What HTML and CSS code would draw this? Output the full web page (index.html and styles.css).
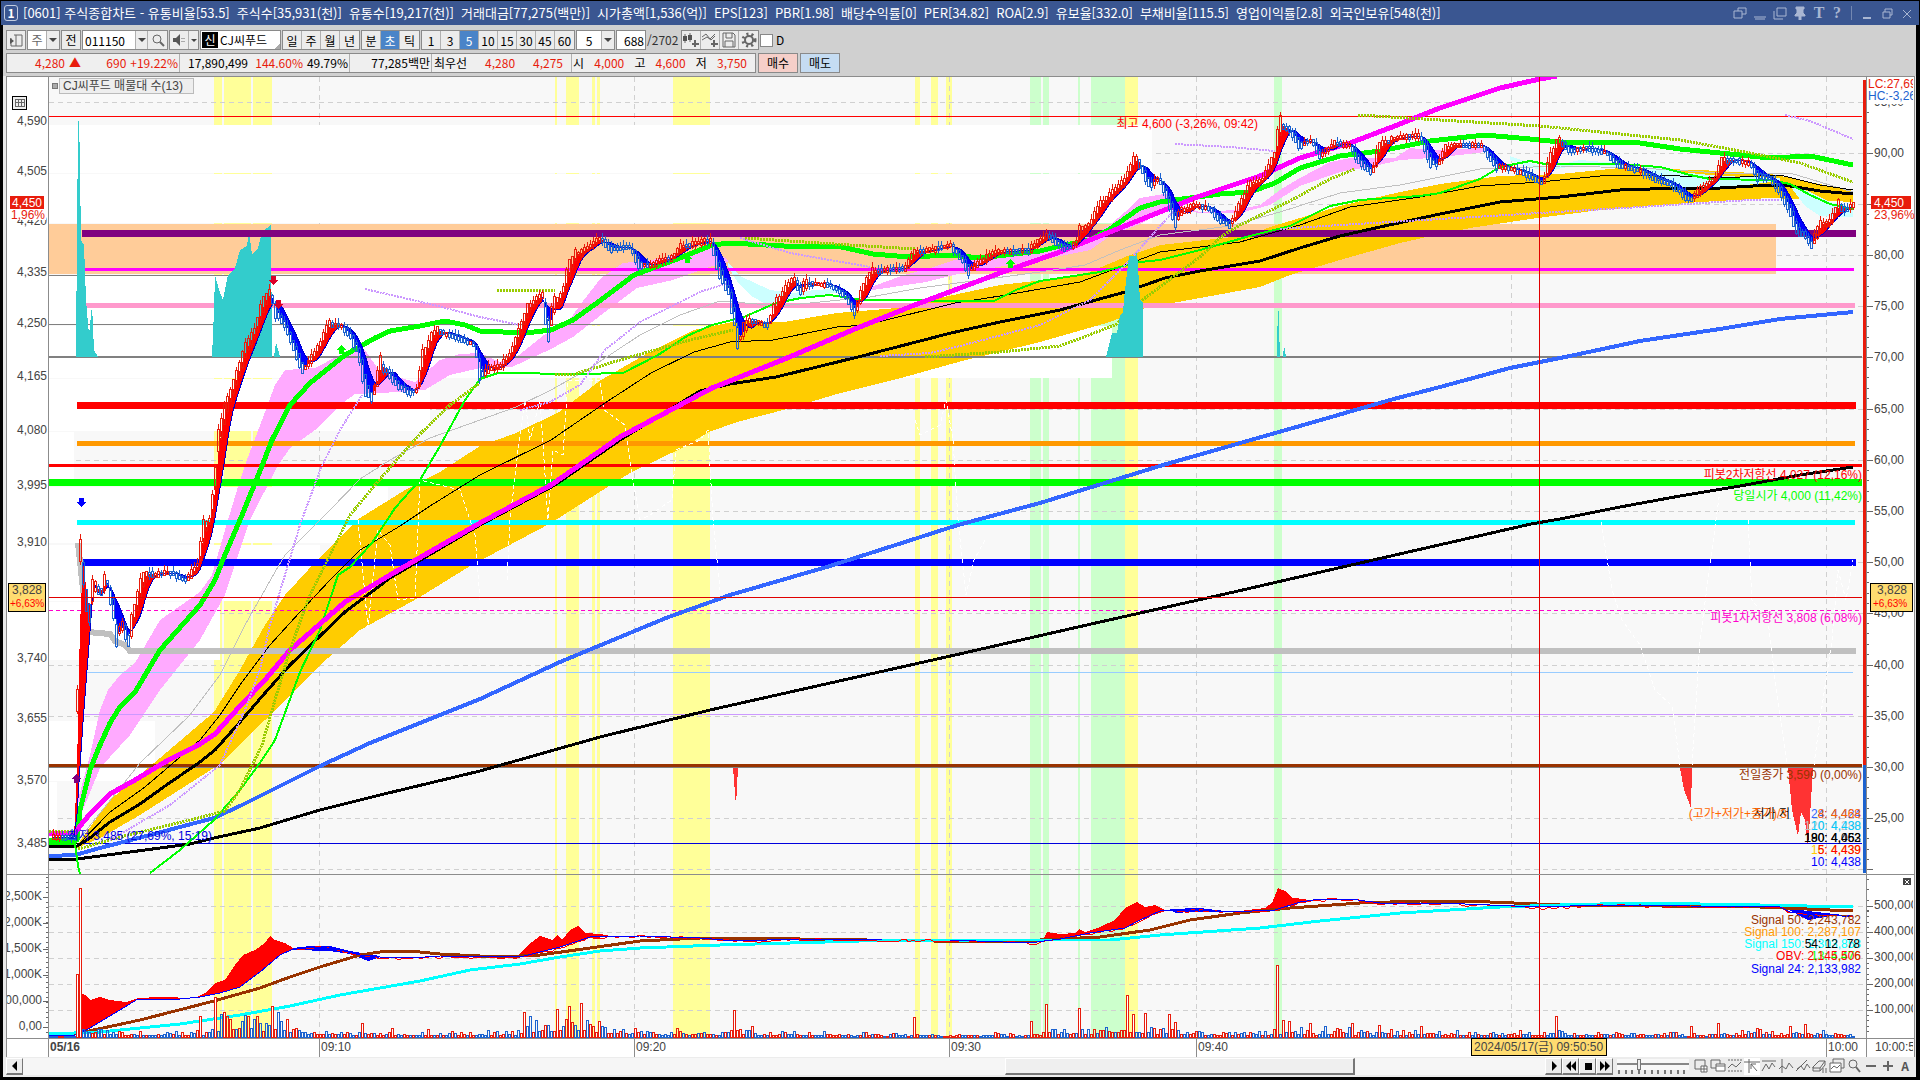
FILE: index.html
```html
<!DOCTYPE html>
<html lang="ko">
  <head>
    <meta charset="UTF-8" />
    <meta name="viewport" content="width=device-width, initial-scale=1.0" />
    <title>[0601] 주식종합차트</title>
    <link rel="stylesheet" href="styles.css">
  </head>
  <body>
    <header class="titlebar">
      <span class="badge">1</span>
      <h1 class="title">
        <span>[0601] 주식종합차트 - 유통비율[53.5]</span>
        <span>주식수[35,931(천)]</span>
        <span>유통수[19,217(천)]</span>
        <span>거래대금[77,275(백만)]</span>
        <span>시가총액[1,536(억)]</span>
        <span>EPS[123]</span>
        <span>PBR[1.98]</span>
        <span>배당수익률[0]</span>
        <span>PER[34.82]</span>
        <span>ROA[2.9]</span>
        <span>유보율[332.0]</span>
        <span>부채비율[115.5]</span>
        <span>영업이익률[2.8]</span>
        <span>외국인보유[548(천)]</span>
      </h1>
      <div class="window-tools">
        <button aria-label="link"><svg width="14" height="14"><path d="M1 5h8v7H1zM5 5V2h8v6H9" /></svg></button>
        <button aria-label="dock"><svg width="14" height="14"><path d="M1 11h12M2 13h10" /></svg></button>
        <button aria-label="copy"><svg width="14" height="14"><path d="M4 2h9v8H4zM1 5v8h9" /></svg></button>
        <button aria-label="pin"><svg width="14" height="14"><path class="solid" d="M3 1h8v2h-1v4l2 2v1H8v4H6v-4H2V9l2-2V3H3z" /></svg></button>
        <button class="glyph">T</button>
        <button class="glyph">?</button>
        <i></i>
        <button aria-label="minimize"><svg width="14" height="14"><path class="thick" d="M3 12h8" /></svg></button>
        <button aria-label="restore"><svg width="14" height="14"><path d="M3 6h7v6H3zM5 6V3h7v6h-2" /></svg></button>
        <button aria-label="close"><svg width="14" height="14"><path d="M3 4l8 8M11 4l-8 8" /></svg></button>
      </div>
    </header>

    <main class="panel">
      <div class="toolbar">
        <button class="box w20" aria-label="side panel"><svg width="14" height="14"><path d="M5 2h8v11H2V5M7 2v11M2 8h2" /><path class="solid" d="M1 5l4 3-4 3z" /></svg></button>
        <div class="group">
          <span class="cell white w20">주</span><button class="cell w14 drop" aria-label="type"></button>
        </div>
        <button class="box w20">전</button>
        <div class="group">
          <input class="code" type="text" value="011150" aria-label="종목코드"><button class="cell w14 drop" aria-label="codes"></button><button class="cell w20" aria-label="search"><svg width="14" height="14"><circle cx="6" cy="6" r="4" /><path class="thick" d="M9 9l4 4" /></svg></button>
        </div>
        <div class="group">
          <button class="cell w20" aria-label="sound"><svg width="14" height="14"><path class="solid" d="M1 5h3l4-4v12L4 9H1z" /><path d="M10 5v1M10 8v1M12 5v1M12 8v1" /></svg></button><button class="cell w10 drop" aria-label="sound options"></button>
        </div>
        <div class="stock"><b>신</b>CJ씨푸드</div>
        <div class="group even">
          <button class="cell w20">일</button><button class="cell w20">주</button><button class="cell w20">월</button><button class="cell w20">년</button>
        </div>
        <div class="group even">
          <button class="cell w20">분</button><button class="cell w20 on">초</button><button class="cell w20">틱</button>
        </div>
        <div class="group even">
          <button class="cell w20">1</button><button class="cell w20">3</button><button class="cell w20 on">5</button><button class="cell w20">10</button><button class="cell w20">15</button><button class="cell w20">30</button><button class="cell w20">45</button><button class="cell w20">60</button>
        </div>
        <div class="group">
          <input class="unit" type="text" value="5" aria-label="주기"><button class="cell w14 drop" aria-label="unit list"></button>
        </div>
        <input class="count" type="text" value="688" aria-label="봉 개수">
        <span class="total">/2702</span>
        <div class="group">
          <button class="cell w20" aria-label="add chart"><svg width="16" height="16"><path d="M2 2v9M7 1v9" /><path class="solid" d="M0 4h4v5H0zM5 3h4v5H5z" /><path class="thick" d="M12 8v7M9 12h7" /></svg></button><button class="cell w20" aria-label="add indicator"><svg width="16" height="16"><path d="M0 5l4-3 4 5 5-5M0 8l5-3 4 3 4-4" /><path class="thick" d="M12 8v7M9 12h7" /></svg></button><button class="cell w20" aria-label="save"><svg width="16" height="16"><path d="M2 1h10l2 2v12H2zM5 1v5h6V1M4 15V9h8v6" /></svg></button><button class="cell w20" aria-label="settings"><svg width="16" height="16"><circle class="gear" cx="8" cy="8" r="6" /><circle class="thick" cx="8" cy="8" r="4" /></svg></button>
        </div>
        <label class="check"><input type="checkbox">D</label>
      </div>

      <div class="quotes">
        <dl class="quote">
          <div class="q1"><dd class="up">4,280</dd><dd class="up tri">▲</dd><dd class="up push">690</dd><dd class="up">+19.22%</dd></div>
          <div class="q2"><dd>17,890,499</dd><dd class="up push">144.60%</dd><dd>49.79%</dd></div>
          <div class="q3"><dd class="push">77,285백만</dd></div>
          <div class="q4"><dt>최우선</dt><dd class="up">4,280</dd><dd class="up">4,275</dd></div>
          <div class="q5"><dt>시</dt><dd class="up">4,000</dd><dt>고</dt><dd class="up">4,600</dd><dt>저</dt><dd class="up">3,750</dd></div>
        </dl>
        <button class="buy">매수</button>
        <button class="sell">매도</button>
      </div>

      <svg id="chart" class="chart" viewBox="3 76 1913 981" role="img" aria-label="CJ씨푸드 5초 차트">
        <defs>
          <clipPath id="mainClip"><rect x="49" y="77" width="1817" height="797" /></clipPath>
          <clipPath id="rightClip"><rect x="1867" y="77" width="46" height="980" /></clipPath>
          <clipPath id="leftClip"><rect x="7" y="77" width="41" height="962" /></clipPath>
        </defs>

        <rect class="page" x="3" y="76" width="1913" height="981" />
        <rect class="paper" x="6" y="76" width="1908" height="981" />
        <rect class="plot" x="49" y="77" width="1817" height="961" />
        <g id="bands"></g>
        <g id="grid"></g>
        <g id="profile"></g>
        <rect class="profile-hot" x="49" y="224" width="1727" height="50" />

        <g clip-path="url(#mainClip)">
          <g id="clouds"></g>
          <g id="levels"></g>
          <path class="ghost" d="M358 520L368 628L378 530L390 545L398 600L415 598L420 480L460 490L475 535L480 600M507 580L510 520L518 450L525 400L530 440L540 400L548 520L553 450L563 455L568 380L600 380L604 410L625 425L633 480L640 520L650 515L672 500L676 450L700 440L708 430L713 520L720 590M915 420L920 435L930 430L940 425L946 400L953 440L958 520L966 595L974 560L985 540M1600 515L1612 590L1622 620L1640 645L1655 690L1672 706L1680 765M1692 765L1700 640L1712 550L1720 490M1748 520L1752 600L1768 620L1775 680L1787 765M1814 765L1820 720L1832 640L1838 570L1846 600L1853 560" />
          <path class="teal" d="M212 357L214 310L215 275L219 290L223 300L228 275L235 268L240 250L247 246L249 230L252 255L258 248L262 232L271 225L272 357Z M274 357L276 342L280 357Z" />
          <g id="averages"></g>
          <g id="candles"></g>
          <path class="teal" d="M76 357L77 230L78 130L79 112L80 170L81 240L84 245L86 300L89 335L92 305L94 350L98 357Z M1106 357L1112 333L1117 333L1120 315L1123 312L1125 290L1129 256L1136 256L1137 250L1140 300L1143 302L1143 357Z M1277 357L1278 295L1280 357Z M1283 357L1284 345L1286 357Z" />
          <path class="drop-red" d="M1680 768H1692L1691 808L1688 800L1684 790ZM1788 768H1813L1811 800L1808 848L1805 820L1801 812L1798 836L1792 810ZM733 768H738L736 806Z" />
          <g id="arrows"></g>
        </g>

        <g id="volume"></g>

        <path class="side-up" d="M1864 80V765" />
        <path class="side-down" d="M1864 765V873" />
        <path class="cross" d="M1539 77V1038M49 597H1862" />

        <g class="frame">
          <path d="M6 1057V76H1914V1057ZM48 76V1057M1866 76V1057M6 874H1914M6 1038H1914" />
          <path d="M319 1038V1057M634 1038V1057M949 1038V1057M1196 1038V1057M1826 1038V1057" />
        </g>

        <g class="legend">
          <rect x="52" y="83" width="5" height="5" class="knob" />
          <rect x="59" y="78" width="134" height="15" />
          <text x="63" y="90">CJ씨푸드 매물대 수(13)</text>
        </g>
        <g class="mini">
          <rect x="12" y="96" width="14" height="13" />
          <path d="M15 99H24V106H15ZM18 99V106M21 99V106M15 102H24" />
        </g>

        <g id="leftAxis" class="axis" clip-path="url(#leftClip)"></g>
        <g id="rightAxis" class="axis" clip-path="url(#rightClip)"></g>
        <g id="notes" class="notes"></g>

        <g class="axis" clip-path="url(#rightClip)">
          <rect class="page-white" x="1867" y="78" width="46" height="26" />
          <text class="c-red" x="1868" y="88">LC:27,69</text>
          <text class="c-sky" x="1868" y="100">HC:-3,26</text>
          <text x="1875" y="1051">10:00:50</text>
        </g>
        <g class="tag">
          <rect class="now" x="10" y="196" width="34" height="13" />
          <text class="c-white" x="12" y="207">4,450</text>
          <rect class="page-white" x="8" y="210" width="38" height="10" />
          <text class="c-red" x="11" y="219">1,96%</text>
          <rect class="now" x="1871" y="196" width="40" height="13" />
          <text class="c-white" x="1874" y="207">4,450</text>
          <text class="c-red" x="1874" y="219">23,96%</text>
          <rect class="cursor" x="8" y="583" width="37" height="28" />
          <text x="12" y="594">3,828</text>
          <text class="c-pure small" x="10" y="607">+6,63%</text>
          <rect class="cursor" x="1870" y="583" width="42" height="28" />
          <text x="1877" y="594">3,828</text>
          <text class="c-pure small" x="1873" y="607">+6,63%</text>
        </g>

        <g class="times">
          <text class="day" x="50" y="1051">05/16</text>
          <text x="321" y="1051">09:10</text>
          <text x="636" y="1051">09:20</text>
          <text x="951" y="1051">09:30</text>
          <text x="1198" y="1051">09:40</text>
          <text x="1828" y="1051">10:00</text>
          <rect x="1471" y="1038" width="135" height="17" />
          <text x="1474" y="1051">2024/05/17(금) 09:50:50</text>
        </g>
        <g class="closer">
          <rect x="1903" y="878" width="8" height="7" />
          <path d="M1905 880L1909 884M1909 880L1905 884" />
        </g>
      </svg>

      <footer class="bottom">
        <button class="key" aria-label="scroll left"><svg width="12" height="12"><path class="solid" d="M8 1v10L3 6z" /></svg></button>
        <div class="track"><div class="thumb"></div></div>
        <button class="key" aria-label="play"><svg width="12" height="12"><path class="solid" d="M4 1v10l5-5z" /></svg></button>
        <button class="key" aria-label="rewind"><svg width="12" height="12"><path class="solid" d="M6 1v10L1 6zM11 1v10L6 6z" /></svg></button>
        <button class="key" aria-label="stop"><svg width="12" height="12"><path class="solid" d="M3 3h7v7H3z" /></svg></button>
        <button class="key" aria-label="forward"><svg width="12" height="12"><path class="solid" d="M1 1v10l5-5zM6 1v10l5-5z" /></svg></button>
        <div class="speed">
          <input type="range" min="0" max="10" value="3" aria-label="속도">
          <svg viewBox="0 0 70 4"><path d="M2 0v4M9 0v4M15 0v4M22 0v4M28 0v4M35 0v4M41 0v4M48 0v4M54 0v4M61 0v4M67 0v4" /></svg>
        </div>
        <div class="draw-tools">
          <button aria-label="add grid"><svg width="16" height="16"><path d="M2 2h10v9H2z" /><path d="M8 8h6v6H8zM11 8v6M8 11h6" class="paper" /></svg></button>
          <button aria-label="windows"><svg width="16" height="16"><path d="M1 2h9v8H1z" /><path class="paper" d="M6 6h9v7H6zM6 8h9" /></svg></button>
          <button aria-label="compare"><svg width="16" height="16"><path stroke-dasharray="2 1" d="M1 2h14M1 13h14" /><path d="M1 10l4-4 4 3 5-5" /></svg></button>
          <button class="pressed" aria-label="cross"><svg width="16" height="16"><path d="M0 4h16M5 1v14M7 6l6 7M7 6v5M7 6h5" /></svg></button>
          <button aria-label="trend"><svg width="16" height="16"><path d="M1 3h14M1 13l4-7 3 5 3-6 3 4" /></svg></button>
          <button aria-label="vertical"><svg width="16" height="16"><path d="M4 1v14M1 11l3-3 4 3 3-6 4 5" /></svg></button>
          <button aria-label="slope"><svg width="16" height="16"><path d="M1 13L12 2M2 11l4-3 3 4 3-6 3 4" /></svg></button>
          <button aria-label="erase"><svg width="16" height="16"><path d="M1 9l6-6h6L8 10H1zM1 9v4h7V10M8 13l5-6V3M11 10v5M14 10v5" /></svg></button>
          <button aria-label="layers"><svg width="16" height="16"><path d="M4 5V1h11v9h-3" /><path class="paper" d="M1 5h11v9H1z" /><path d="M2 11l3-3 3 2 3-3" /></svg></button>
          <button aria-label="zoom"><svg width="16" height="16"><circle cx="7" cy="6" r="4" /><path class="thick" d="M10 9l4 5" /></svg></button>
          <button aria-label="zoom out"><svg width="16" height="16"><path class="thick" d="M3 8h10" /></svg></button>
          <button aria-label="zoom in"><svg width="16" height="16"><path class="thick" d="M3 8h10M8 3v10" /></svg></button>
          <button class="letter">A</button>
        </div>
      </footer>
    </main>
    <script src="chart.js"></script>
  </body>
</html>
```

FILE: styles.css
```css
* {
  box-sizing: border-box;
}
body {
  margin: 0;
  background: #000;
  color: #000;
  font: 12px/14px "Noto Sans CJK KR", "Liberation Sans", sans-serif;
}
button,
input {
  font: inherit;
  color: inherit;
  margin: 0;
  padding: 0;
}
button {
  display: flex;
  align-items: center;
  justify-content: center;
  border: 0;
  background: none;
}
svg path,
svg circle {
  fill: none;
  stroke: #666;
}
svg .solid {
  fill: #555;
  stroke: none;
}
svg .thick {
  stroke-width: 2;
}

/* title bar */
.titlebar {
  display: flex;
  align-items: center;
  height: 25px;
  margin: 0 1px;
  padding: 0 3px;
  border-top: 1px solid #000;
  background: #3a5691;
  color: #fff;
}
.badge {
  width: 14px;
  height: 16px;
  border: 1px solid #c4cde0;
  border-radius: 3px;
  font-weight: bold;
  text-align: center;
}
.title {
  display: flex;
  flex: 1;
  gap: 7px;
  margin: 0 0 0 5px;
  font-size: 13px;
  font-weight: normal;
  line-height: 20px;
  white-space: nowrap;
}
.window-tools {
  display: flex;
  align-items: center;
  gap: 2px;
}
.window-tools button {
  width: 18px;
}
.window-tools path {
  stroke: #a9b6d2;
}
.window-tools .solid {
  fill: #a9b6d2;
}
.window-tools .glyph {
  width: 16px;
  color: #a9b6d2;
  font: bold 16px/16px "Liberation Serif", serif;
}
.window-tools i {
  height: 14px;
  margin: 0 4px;
  border-left: 1px solid #7387b1;
}

/* toolbars */
.panel {
  margin: 0 4px 0 3px;
  background: #d0d0d0;
}
.toolbar {
  display: flex;
  gap: 1px;
  height: 28px;
  padding: 5px 3px 3px;
}
.box,
.group,
.stock,
.count {
  display: flex;
  height: 20px;
  border: 1px solid #8a8a8a;
  background: #ececec;
}
.cell {
  height: 18px;
  border-right: 1px solid #b0b0b0;
  background: #ececec;
  text-align: center;
  line-height: 17px;
}
.cell:last-child {
  border-right: 0;
}
.even .cell {
  width: 19px;
}
.w20 {
  width: 19px;
}
.box.w20 {
  width: 20px;
}
.w14 {
  width: 12px;
}
.w10 {
  width: 9px;
}
.white {
  background: #fff;
  color: #666;
}
.on {
  background: #4a84c8;
  color: #fff;
}
.drop::after {
  content: "";
  border: 4px solid transparent;
  border-top: 4px solid #444;
  border-bottom: 0;
}
.w10.drop::after {
  border-width: 3px;
  border-bottom: 0;
}
.code,
.unit {
  width: 53px;
  height: 18px;
  padding-left: 2px;
  border: 0;
  border-right: 1px solid #b0b0b0;
  background: #fff;
}
.unit {
  width: 25px;
  padding: 0;
  text-align: center;
}
.stock {
  width: 81px;
  background: linear-gradient(135deg, #fff 94%, #aaa 94%);
  line-height: 17px;
}
.stock b {
  width: 16px;
  margin: 1px 2px 1px 1px;
  background: #000;
  color: #fff;
  font-weight: normal;
  line-height: 15px;
  text-align: center;
}
.count {
  width: 30px;
  padding-right: 1px;
  background: #fff;
  text-align: right;
}
.total {
  width: 33px;
  color: #333;
  line-height: 19px;
}
.gear {
  stroke-width: 3;
  stroke-dasharray: 2 3;
}
.check {
  display: flex;
  align-items: center;
  gap: 3px;
}
.check input {
  width: 13px;
  height: 13px;
  border: 1px solid #888;
  background: #fff;
  appearance: none;
}

.quotes {
  display: flex;
  gap: 2px;
  height: 23px;
  padding: 0 3px 3px;
}
.quote {
  display: flex;
  width: 750px;
  margin: 0;
  border: 1px solid #8a8a8a;
  background: #efefef;
  font-size: 12px;
  line-height: 17px;
  white-space: nowrap;
}
.quote div {
  display: flex;
  gap: 4px;
  padding: 0 1px 0 8px;
  border-right: 1px solid #b0b0b0;
}
.quote dd,
.quote dt {
  margin: 0;
}
.quote .up {
  color: #e81c0c;
}
.quote .push {
  margin-left: auto;
}
.quote .q1 {
  width: 173px;
  padding-left: 28px;
}
.quote .q2 {
  width: 170px;
}
.quote .q3 {
  width: 82px;
}
.quote .q4 {
  width: 140px;
  justify-content: space-between;
  padding: 0 8px 0 2px;
}
.quote .q5 {
  flex: 1;
  justify-content: space-between;
  padding: 0 8px 0 1px;
  border-right: 0;
}
.buy,
.sell {
  width: 40px;
  border: 1px solid #8a8a8a;
  background: #f6cfc9;
}
.sell {
  background: #c5dcf2;
}

/* chart */
.chart {
  display: block;
  width: 100%;
  font: 12px "Liberation Sans", "Noto Sans CJK KR", sans-serif;
  shape-rendering: crispEdges;
}
.chart text {
  fill: #444;
}
.chart .page {
  fill: #e8e8e8;
}
.chart .paper,
.chart .page-white {
  fill: #fff;
}
.chart .plot {
  fill: #f8f8f8;
}
.chart .yellow {
  fill: #ffff99;
}
.chart .green {
  fill: #ccffcc;
}
.chart .profile {
  fill: #fff;
}
.chart .profile-hot {
  fill: #ffcc99;
}
.chart .gridline {
  stroke: #d0d0d0;
  stroke-dasharray: 5 4;
}
.chart .frame path {
  stroke: #8c8c8c;
}
.chart .ghost {
  stroke: #fff;
  stroke-dasharray: 4 3;
}
.chart .teal {
  fill: #33cccc;
  stroke: none;
}
.chart .drop-red {
  fill: #ff3333;
  stroke: none;
}
.chart .side-up {
  stroke: #e81c0c;
  stroke-width: 3;
}
.chart .side-down {
  stroke: #1c62cf;
  stroke-width: 3;
}
.chart .cross {
  stroke: #e00000;
}
.chart .legend rect {
  fill: #eee;
  stroke: #bbb;
}
.chart .legend .knob {
  fill: #aaa;
  stroke: #777;
}
.chart .mini rect {
  fill: #eee;
  stroke: #000;
}
.chart .now {
  fill: #e81c0c;
}
.chart .cursor,
.chart .times rect {
  fill: #ffdc70;
  stroke: #000;
}
.chart .day {
  font-weight: bold;
}
.chart .small {
  font-size: 10px;
}
.chart .closer rect {
  fill: #444;
}
.chart .closer path {
  stroke: #fff;
}
.chart .notes text {
  text-anchor: end;
}
.chart .axis .end {
  text-anchor: end;
}
.chart .c-red {
  fill: #e81c0c;
}
.chart .c-pure {
  fill: #f00;
}
.chart .c-sky {
  fill: #1c62cf;
}
.chart .c-white {
  fill: #fff;
}

/* bottom bar */
.bottom {
  display: flex;
  align-items: center;
  height: 20px;
  padding: 0 3px 2px;
  background: #ececec;
}
.key {
  width: 17px;
  height: 17px;
  border: 1px solid #fff;
  border-right-color: #777;
  border-bottom: 2px solid #777;
  background: #ececec;
}
.key .solid {
  fill: #000;
}
.track {
  display: flex;
  flex: 1;
  height: 17px;
  background: #f6f6f6;
}
.thumb {
  width: 23%;
  margin-left: 64.5%;
  border: 1px solid #fff;
  border-right: 2px solid #777;
  border-bottom: 2px solid #777;
  background: #efefef;
}
.speed {
  width: 72px;
  margin: 0 4px;
}
.speed input {
  display: block;
  width: 72px;
  height: 11px;
  appearance: none;
  background: linear-gradient(#f8f8f8 4px, #888 4px, #888 6px, #f8f8f8 6px);
}
.speed input::-webkit-slider-thumb {
  width: 4px;
  height: 11px;
  border: 1px solid #777;
  background: #eee;
  appearance: none;
}
.speed svg {
  display: block;
  height: 4px;
}
.speed path {
  stroke: #000;
}
.draw-tools {
  display: flex;
  justify-content: space-between;
  width: 220px;
}
.draw-tools button {
  width: 16px;
  height: 17px;
}
.draw-tools .pressed {
  background: #fff;
}
.draw-tools .paper {
  fill: #fff;
}
.letter {
  color: #555;
  font-weight: bold;
}
```

FILE: chart.js
```javascript
const NS = "http://www.w3.org/2000/svg";

function add(parent, tag, attrs, text) {
  const el = document.createElementNS(NS, tag);
  for (const key in attrs) el.setAttribute(key, attrs[key]);
  if (text) el.textContent = text;
  document.getElementById(parent).appendChild(el);
}

// "x,y x,y ..." -> [[x, y], ...]
const points = (s) => s.split(" ").map((p) => p.split(",").map(Number));

function line(parent, color, width, pts, dash) {
  const attrs = { points: pts, fill: "none", stroke: color, "stroke-width": width, "stroke-linejoin": "round" };
  if (dash) attrs["stroke-dasharray"] = dash;
  add(parent, "polyline", attrs);
}

function area(parent, color, upper, lower) {
  const back = lower.split(" ").reverse().join(" ");
  add(parent, "polygon", { points: upper + " " + back, fill: color });
}

function valueAt(pts, x) {
  for (let i = 1; i < pts.length; i++) {
    if (x <= pts[i][0]) {
      const [x0, y0] = pts[i - 1];
      const [x1, y1] = pts[i];
      return y0 + ((y1 - y0) * (x - x0)) / (x1 - x0);
    }
  }
  return pts[pts.length - 1][1];
}

let seed = 7;
function rand() {
  seed = (seed * 16807) % 2147483647;
  return seed / 2147483647;
}

// Signal bands
[[214, 222], [224, 251], [253, 272], [555, 557], [566, 579], [592, 595], [597, 600], [673, 710],
 [915, 920], [931, 938], [946, 952], [1125, 1138]].forEach(([a, b]) =>
  add("bands", "rect", { class: "yellow", x: a, y: 77, width: b - a, height: 961 }));
[[1030, 1041], [1043, 1049], [1078, 1080], [1091, 1125], [1274, 1282]].forEach(([a, b]) =>
  add("bands", "rect", { class: "green", x: a, y: 77, width: b - a, height: 961 }));

// Grid
const rows = [102, 153, 204, 255, 306, 357, 409, 460, 511, 562, 613, 665, 716, 767, 818, 869];
const volRows = [906, 932, 958, 984, 1010];
rows.concat(volRows).forEach((y) => add("grid", "path", { class: "gridline", d: `M49 ${y}H1864` }));
[319, 634, 949, 1196, 1511, 1826].forEach((x) => add("grid", "path", { class: "gridline", d: `M${x} 77V1038` }));

// Volume profile
[[125, 173, 1152], [174, 223, 1152], [275, 325, 948], [326, 378, 1112], [379, 431, 430], [432, 486, 74],
 [487, 543, 388], [545, 601, 320], [602, 660, 220], [721, 781, 155], [782, 842, 57]].forEach(([a, b, x]) =>
  add("profile", "rect", { class: "profile", x: 49, y: a, width: x - 49, height: b - a }));

// Clouds
area("clouds", "#ffcc00",
  "77,845 110,800 160,758 214,712 240,670 265,625 285,595 320,557 360,518 405,490 440,472 480,446 516,433 559,412 601,380 648,353 694,330 737,321 784,322 837,313 909,307 944,297 1000,285 1080,276 1130,255 1160,245 1250,235 1270,227 1300,218 1340,206 1400,192 1440,184 1500,176 1560,174 1620,168 1700,170 1770,174 1800,180 1853,191",
  "77,848 100,838 140,815 220,764 265,720 320,665 360,630 420,597 470,566 487,557 551,523 598,493 630,473 684,447 709,432 737,422 787,409 837,394 901,378 962,361 1040,342 1110,322 1145,308 1200,298 1260,287 1290,275 1340,260 1400,243 1440,234 1470,228 1530,219 1600,210 1700,202 1770,198 1853,202");
area("clouds", "#ffaaff",
  "78,800 90,755 100,710 108,690 120,675 135,663 160,620 200,592 212,575 225,530 237,490 245,465 262,420 275,385 285,370 315,368 340,355 365,350 380,372 415,382 440,360 460,354 480,353 500,362 519,355 544,335 566,325 580,305 601,278 623,263 651,260 712,248 728,260",
  "82,812 100,768 130,735 160,690 200,640 225,595 250,520 277,467 290,448 315,430 340,405 355,394 400,392 425,390 450,375 480,368 512,367 551,349 573,337 601,315 637,288 673,280 709,267 728,262");
area("clouds", "#ccffff", "728,262 740,276 770,290 793,293 815,290 845,288", "728,266 738,283 750,295 765,304 790,300 845,291");
area("clouds", "#ffaaff",
  "866,289 901,276 930,268 955,260 1040,252 1070,247 1110,225 1125,212 1140,198 1170,193 1178,205 1200,212 1235,210 1260,205 1280,190 1300,178 1330,162 1350,158 1395,158 1410,148 1430,150 1485,148",
  "873,290 926,282 962,273 1040,260 1070,254 1090,250 1110,236 1140,224 1170,208 1200,213 1240,213 1270,205 1300,186 1340,172 1375,166 1400,160 1430,158 1460,155 1485,152");
area("clouds", "#ccffff", "1510,156 1545,168 1580,160 1640,165 1680,172 1720,176 1780,178", "1510,160 1545,172 1580,164 1640,169 1680,190 1720,188 1780,181");
area("clouds", "#ccffff", "1790,184 1810,192 1830,202 1853,207", "1790,186 1805,206 1820,216 1853,217");

// Horizontal levels: colour, width, y, x from, x to
[["#f00", 1, 116, 49, 1862], ["#808080", 1, 275, 49, 948], ["#808080", 1, 324, 49, 712],
 ["#808080", 2, 357, 49, 1862], ["#800080", 7, 233, 82, 1856], ["#f0f", 3, 269, 85, 1854],
 ["#ff99cc", 5, 305, 86, 1855], ["#f00", 7, 405, 77, 1856], ["#ff9900", 5, 443, 77, 1855],
 ["#f00", 3, 465, 49, 1862], ["#0f0", 7, 482, 49, 1862], ["#0ff", 5, 522, 77, 1855],
 ["#00f", 7, 562, 77, 1856], ["#99ccff", 1, 672, 79, 1853], ["#cc99ff", 1, 714, 79, 1853],
 ["#993300", 3, 765, 49, 1862], ["#808080", 1, 767, 49, 1862], ["#00d", 1, 843, 49, 1862]].forEach(([c, w, y, a, b]) =>
  line("levels", c, w, `${a},${y} ${b},${y}`));
line("levels", "#ff00cc", 1, "49,610 1862,610", "4 3");
line("levels", "#c0c0c0", 6, "78,543 82,580 88,632 110,634 115,641 125,645 130,651 1856,651");

// Moving averages
line("averages", "#800080", 7, "240,233 280,233");
line("averages", "#c0c0c0", 1, "80,838 140,763 190,715 220,675 245,625 275,572 285,555 330,510 360,479 390,460 430,438 480,420 516,407 551,390 590,368 640,335 680,315 720,301 745,303 780,306 870,297 920,288 1040,272 1085,265 1120,250 1160,235 1230,226 1280,212 1340,193 1400,185 1480,169 1560,166 1640,168 1720,173 1790,173 1853,192");
line("averages", "#3366ff", 4, "49,856 75,855 100,848 150,835 214,818 240,806 290,781 320,766 370,743 420,723 480,699 560,662 666,618 730,595 830,566 958,525 1040,503 1163,465 1300,426 1390,400 1440,387 1510,368 1570,356 1640,341 1720,329 1780,319 1853,312");
line("averages", "#000", 3, "49,859 77,859 130,852 190,844 214,838 260,828 320,810 380,795 480,771 600,737 710,710 955,655 1100,622 1225,594 1347,566 1531,524 1560,519 1620,507 1680,496 1740,486 1800,475 1853,467");
line("averages", "#000", 1, "49,845 80,843 110,812 145,787 200,740 220,715 240,685 270,645 300,612 330,580 360,550 400,526 430,506 480,475 551,440 605,403 651,373 694,352 730,342 773,340 837,327 866,325 955,303 1000,296 1080,282 1160,252 1240,242 1300,225 1350,207 1420,197 1480,186 1540,182 1600,176 1660,175 1720,178 1780,175 1800,180 1820,185 1853,190");
line("averages", "#000", 3, "49,847 77,846 90,838 110,822 140,804 165,786 200,762 215,750 240,722 265,693 290,665 320,636 345,612 390,578 480,525 555,485 620,440 700,391 730,384 776,377 858,357 951,333 1000,322 1060,310 1125,292 1165,278 1200,271 1260,261 1300,248 1340,236 1380,227 1440,214 1500,202 1560,197 1620,190 1680,188 1720,188 1770,185 1790,186 1820,191 1853,194");
line("averages", "#0f0", 5, "49,840 77,840 80,810 90,770 100,745 110,723 120,707 135,692 160,650 200,605 215,580 222,562 240,520 262,466 272,440 290,405 310,383 345,355 375,338 390,331 420,326 445,321 465,325 480,331 526,333 551,330 573,320 601,300 634,275 680,258 712,245 730,243 784,246 837,246 873,254 909,257 951,255 980,258 1040,251 1060,246 1090,240 1110,229 1140,208 1160,202 1220,194 1250,192 1275,183 1300,168 1340,156 1380,151 1430,141 1485,135 1530,139 1560,142 1640,143 1680,149 1720,153 1770,158 1810,156 1853,165");
line("averages", "#0f0", 2, "49,844 75,844 78,866 80,874");
line("averages", "#0f0", 2, "150,873 180,850 214,820 240,790 262,760 275,740 300,672 320,630 338,575 350,567 372,543 395,508 420,480 440,446 465,400 480,379 498,373 580,374 623,373 658,355 687,336 712,325 744,317 776,303 801,298 830,295 862,300 994,301 1016,290 1040,281 1100,272 1140,262 1160,260 1200,250 1250,236 1290,226 1330,206 1360,200 1420,196 1440,193 1480,179 1500,167 1530,161 1545,164 1620,164 1660,167 1690,175 1710,179 1770,180 1790,184 1810,195 1830,204 1853,209");
line("averages", "#f0f", 5, "49,833 75,833 80,826 90,814 110,794 135,780 165,762 200,744 215,734 240,706 265,680 290,650 320,624 345,602 390,575 440,546 480,523 551,485 620,437 712,388 780,361 855,329 912,306 1000,273 1060,252 1110,232 1160,212 1200,196 1260,176 1300,158 1350,143 1400,124 1440,108 1500,88 1540,79 1557,76");

["49,831 77,831", "78,849 120,837 190,820 225,811 240,790 262,745 275,700 290,650 310,595 330,555 350,515 375,485 395,462 420,434 450,405 480,383",
 "497,290 555,290", "555,375 575,374 620,360 690,340 733,330", "745,238 850,245 915,249",
 "925,357 1000,352 1060,346 1115,325 1145,298 1200,257 1222,236 1240,225 1290,201 1330,179 1355,169",
 "1358,115 1440,120 1540,126 1620,134 1680,140 1740,151 1800,163 1853,182"].forEach((p) =>
  line("averages", "#99cc00", 3, p, "2 1"));
["110,840 170,805 220,765 245,710 260,670 270,625 285,575 300,525 320,470 340,430 362,395",
 "365,289 430,304 480,317 520,325", "520,410 550,402 580,385 605,350 640,322 670,307 700,292 728,283",
 "740,238 790,253 830,260 870,267", "880,356 930,353 960,346 1040,325 1090,300 1130,260 1160,226 1175,210",
 "1175,144 1230,147 1275,151", "1280,229 1340,225 1440,219 1540,213 1640,207 1750,200 1780,200",
 "1785,115 1810,121 1853,139"].forEach((p) =>
  line("averages", "#cc99ff", 2, p, "2 1"));

// Price candles with the ribbon between the two fast averages
const price = points("49,837 76,837 77,700 78,500 80,550 84,580 88,620 92,590 96,585 100,595 106,575 108,590 112,600 116,635 122,625 128,640 132,620 136,605 142,580 147,573 155,575 165,572 175,574 185,580 190,575 198,565 203,530 210,520 214,490 218,440 225,410 235,380 245,350 255,330 262,305 270,292 275,310 285,325 295,350 303,370 310,360 320,345 328,325 340,325 350,335 358,350 365,385 372,398 380,365 388,372 398,385 410,392 417,390 422,360 430,340 436,330 450,335 465,340 475,345 480,375 490,368 500,366 510,355 518,335 527,310 535,300 542,295 548,330 553,305 562,295 568,270 575,255 585,250 600,238 610,248 630,247 640,265 652,265 660,260 672,258 680,248 700,242 711,240 718,268 728,290 735,320 738,345 742,330 750,320 768,325 775,305 785,290 793,278 800,290 805,283 830,285 845,295 855,312 862,290 872,272 885,270 905,268 915,252 930,250 950,245 960,255 968,270 980,262 995,252 1028,250 1040,240 1048,235 1065,248 1075,245 1080,230 1090,225 1100,205 1115,190 1125,180 1135,158 1140,165 1150,185 1158,178 1165,190 1175,220 1180,212 1195,205 1210,208 1220,220 1230,225 1240,205 1250,185 1262,180 1275,155 1279,125 1290,130 1300,145 1312,140 1320,155 1335,143 1350,145 1360,162 1372,172 1380,145 1395,138 1420,135 1430,160 1437,165 1445,150 1452,145 1482,145 1495,165 1510,168 1530,175 1543,183 1550,160 1558,140 1570,150 1590,148 1605,152 1620,165 1640,170 1655,178 1670,183 1690,200 1700,190 1715,178 1722,160 1735,160 1750,163 1757,175 1770,178 1780,190 1790,210 1797,230 1805,235 1811,245 1820,225 1830,222 1838,205 1845,210 1853,205");
const bars = [];
for (let x = 50; x <= 1853; x += 3) bars.push([x, valueAt(price, x)]);
const mean = (i, n) => {
  const part = bars.slice(Math.max(0, i - n + 1), i + 1);
  return part.reduce((s, b) => s + b[1], 0) / part.length;
};
let slow = "";
for (let i = 1; i < bars.length; i++) {
  const [x0, x1] = [bars[i - 1][0], bars[i][0]];
  const [f0, f1, s0, s1] = [mean(i - 1, 2), mean(i, 2), mean(i - 1, 6), mean(i, 6)];
  add("candles", "polygon", { points: `${x0},${f0} ${x1},${f1} ${x1},${s1} ${x0},${s0}`, fill: f1 < s1 ? "#f00" : "#00f" });
  slow += `${x1},${s1} `;
}
line("candles", "#00c", 1, slow.trim());
for (let i = 1; i < bars.length; i++) {
  const [x, y] = bars[i];
  const move = y - bars[i - 1][1] + (rand() - 0.5) * 4;
  const size = Math.min(22, 3 + Math.abs(move) * 1.2);
  const color = move < 0 ? "#e81c0c" : "#1c62cf";
  const wick = Math.floor(rand() * 6);
  const top = Math.round(y - size / 2);
  add("candles", "path", { d: `M${x} ${top - wick}V${top}M${x - 1} ${top}h2v${Math.round(size)}h-2zM${x} ${top + Math.round(size)}v${Math.floor(rand() * 5)}`, style: `stroke:${color}` });
}

// Buy and sell arrows: x, y, direction, colour
[[273, 280, 1, "#dc0028"], [278, 304, 1, "#dc0028"], [341, 350, -1, "#0f0"], [687, 259, -1, "#0f0"],
 [1010, 264, -1, "#0f0"], [81, 502, 1, "#00f"], [76, 779, -1, "#800080"]].forEach(([x, y, d, c]) =>
  add("arrows", "polygon", { fill: c, points: `${x - 2},${y - 4 * d} ${x + 3},${y - 4 * d} ${x + 3},${y} ${x + 5},${y} ${x},${y + 5 * d} ${x - 5},${y} ${x - 2},${y}` }));

// OBV panel
area("volume", "#f00",
  "75,1036 77,1036 79,993 85,995 90,1000 100,997 110,1000 126,1002 138,998 160,997 195,998 205,993 215,983 225,980 235,965 243,955 255,950 265,943 270,936 275,940 285,943 293,948",
  "75,1036 90,1028 138,999 180,999 200,997 220,993 240,987 260,972 280,955 293,949");
area("volume", "#f00", "510,957 518,956 528,945 540,936 553,940 557,935 562,940 570,930 578,926 585,933 600,934 610,936", "510,958 530,956 560,947 590,938 610,937");
area("volume", "#f00", "1043,940 1047,932 1060,934 1075,933 1079,929 1085,932 1100,927 1115,920 1125,908 1137,902 1145,907 1155,905 1165,910", "1043,941 1060,939 1090,933 1125,928 1140,920 1165,911");
area("volume", "#f00", "1240,911 1265,908 1272,903 1278,888 1285,891 1292,898 1305,899 1312,902", "1240,912 1275,910 1300,903 1312,902");
area("volume", "#00f", "293,948 310,946 330,946 350,951 380,956", "293,950 330,951 350,954 368,961 380,957");
area("volume", "#00f", "1170,909 1200,908 1225,911", "1170,910 1176,913 1190,912 1225,912");
area("volume", "#00f", "1785,907 1800,910 1825,913 1853,916", "1785,908 1808,920 1830,916 1853,917");
line("volume", "#993300", 3, "49,1034 75,1034 140,1020 214,1001 260,988 290,977 320,967 360,955 380,952 410,951 440,954 500,957 540,955 590,948 640,941 700,938 800,939 1000,942 1100,937 1150,930 1190,920 1240,913 1290,908 1360,903 1420,901 1490,902 1560,905 1760,907 1853,911");
line("volume", "#0ff", 3, "49,1034 100,1032 180,1024 240,1015 290,1006 340,995 380,988 420,981 470,970 520,964 560,957 600,951 640,948 720,945 860,941 1000,940 1110,940 1160,935 1260,928 1320,921 1400,913 1500,907 1560,905 1640,903 1760,905 1853,907");
const obv = points("49,1035 75,1035 90,1028 138,999 180,999 200,997 220,993 240,987 260,972 280,955 293,949 320,947 340,950 360,955 380,957 410,958 440,956 520,957 560,947 590,937 640,936 700,938 735,941 800,939 882,940 950,940 1029,943 1060,939 1090,933 1125,928 1140,920 1160,911 1200,910 1230,912 1275,910 1300,902 1320,899 1350,899 1380,903 1440,903 1540,907 1600,905 1690,906 1780,907 1790,912 1820,914 1853,916");
let wave = "";
for (let x = 297; x <= 1853; x += 4) wave += `${x},${Math.round(valueAt(obv, x) + rand() * 3 - 1)} `;
line("volume", "#f00", 1, wave.trim());
line("volume", "#00f", 1, obv.join(" "));

// Volume bars
const level = points("49,1 76,2 80,16 110,12 130,6 200,6 214,18 225,26 275,24 300,12 330,9 350,7 480,6 515,9 530,18 570,26 600,15 640,9 720,7 735,14 760,7 900,5 1025,5 1050,11 1090,9 1110,18 1140,18 1160,9 1200,6 1275,9 1285,14 1310,9 1380,9 1480,6 1560,7 1700,5 1790,10 1820,8 1853,4");
const spikes = { 77: 63, 80: 149, 200: 21, 215: 40, 224: 25, 272: 31, 287: 18, 362: 14, 392: 9, 524: 25, 557: 28, 569: 31, 581: 34, 599: 16, 734: 27, 914: 20, 1031: 16, 1046: 33, 1079: 29, 1127: 42, 1133: 23, 1145: 24, 1169: 23, 1175: 15, 1277: 72, 1283: 17, 1289: 16, 1310: 14, 1352: 14, 1379: 12, 1421: 11, 1556: 21, 1691: 11, 1718: 14, 1790: 11, 1805: 13 };
for (let x = 50; x <= 1853; x += 3) {
  const h = spikes[x] || Math.max(1, Math.round(valueAt(level, x) * (0.25 + rand() * rand())));
  const color = rand() < 0.5 || spikes[x] ? "#e81c0c" : "#1c62cf";
  add("volume", "path", { d: `M${x - 1} 1037v${-h}h2v${h}z`, style: `stroke:${color};fill:${spikes[x] ? "#fff" : "none"}` });
}

// Axes
[["4,590", 121], ["4,505", 171], ["4,420", 221], ["4,335", 272], ["4,250", 323], ["4,165", 376], ["4,080", 430],
 ["3,995", 485], ["3,910", 542], ["3,740", 658], ["3,655", 718], ["3,570", 780], ["3,485", 843]].forEach(([t, y]) =>
  add("leftAxis", "text", { class: "end", x: 47, y: y + 4 }, t));
["2,500K", "2,000K", "1,500K", "1,000K", "500,000", "0,00"].forEach((t, i) => {
  add("leftAxis", "text", { class: "end", x: 42, y: 900 + i * 26 }, t);
  add("leftAxis", "path", { d: `M43 ${897 + i * 26}h5` });
});
for (let y = 877; y < 1036; y += 5) add("leftAxis", "path", { d: `M46 ${y}h2` });
rows.forEach((y, i) => {
  if (i < 15) add("rightAxis", "text", { x: 1874, y: y + 4 }, `${95 - i * 5},00`);
  add("rightAxis", "path", { d: `M1867 ${y}h6M1867 ${y + 10}h2M1867 ${y + 20}h2M1867 ${y + 31}h2M1867 ${y + 41}h2` });
});
volRows.forEach((y, i) => {
  add("rightAxis", "text", { x: 1874, y: y + 3 }, `${5 - i}00,000`);
  add("rightAxis", "path", { d: `M1867 ${y}h6M1867 ${y + 5}h2M1867 ${y + 10}h2M1867 ${y + 16}h2M1867 ${y + 21}h2` });
});

// Line captions
[["최고 4,600 (-3,26%, 09:42)", 1258, 128, "#f00"], ["최저 3,485 (27,69%, 15:19)", 212, 840, "#00d"],
 ["피봇2차저항선 4,027 (12,16%)", 1862, 479, "#f00"], ["당일시가 4,000 (11,42%)", 1862, 500, "#0f0"],
 ["피봇1차저항선 3,808 (6,08%)", 1862, 622, "#ff00cc"], ["전일종가 3,590 (0,00%)", 1862, 779, "#993300"],
 ["저가 저", 1790, 818, "#000"], ["24: 4,424", 1861, 818, "#3366ff"],
 ["(고가+저가+종가)/3", 1787, 818, "#ff6600"], ["8: 4,468", 1861, 818, "#ff6600"],
 ["120: 4,280", 1861, 830, "#c0c0c0"],
 ["10: 4,438", 1861, 830, "#00ccff"], ["180: 4,063", 1861, 842, "#000"], ["190: 4,452", 1861, 842, "#000"],
 ["16: 4,439", 1861, 854, "#ffcc00"], ["5: 4,439", 1861, 854, "#f00"], ["10: 4,438", 1861, 866, "#00f"],
 ["Signal 50: 2,243,782", 1861, 924, "#993300"], ["Signal 100: 2,287,107", 1861, 936, "#ff9900"],
 ["Signal 150: 2,303,858", 1861, 948, "#0ff"], ["54: 12", 1838, 948, "#000"], ["78", 1860, 948, "#000"],
 ["13: 4,476", 1861, 960, "#0f0"], ["OBV: 2,145,506", 1861, 960, "#f00"], ["Signal 24: 2,133,982", 1861, 973, "#00f"]].forEach(([t, x, y, c]) =>
  add("notes", "text", { x, y, style: `fill:${c}` }, t));
```
